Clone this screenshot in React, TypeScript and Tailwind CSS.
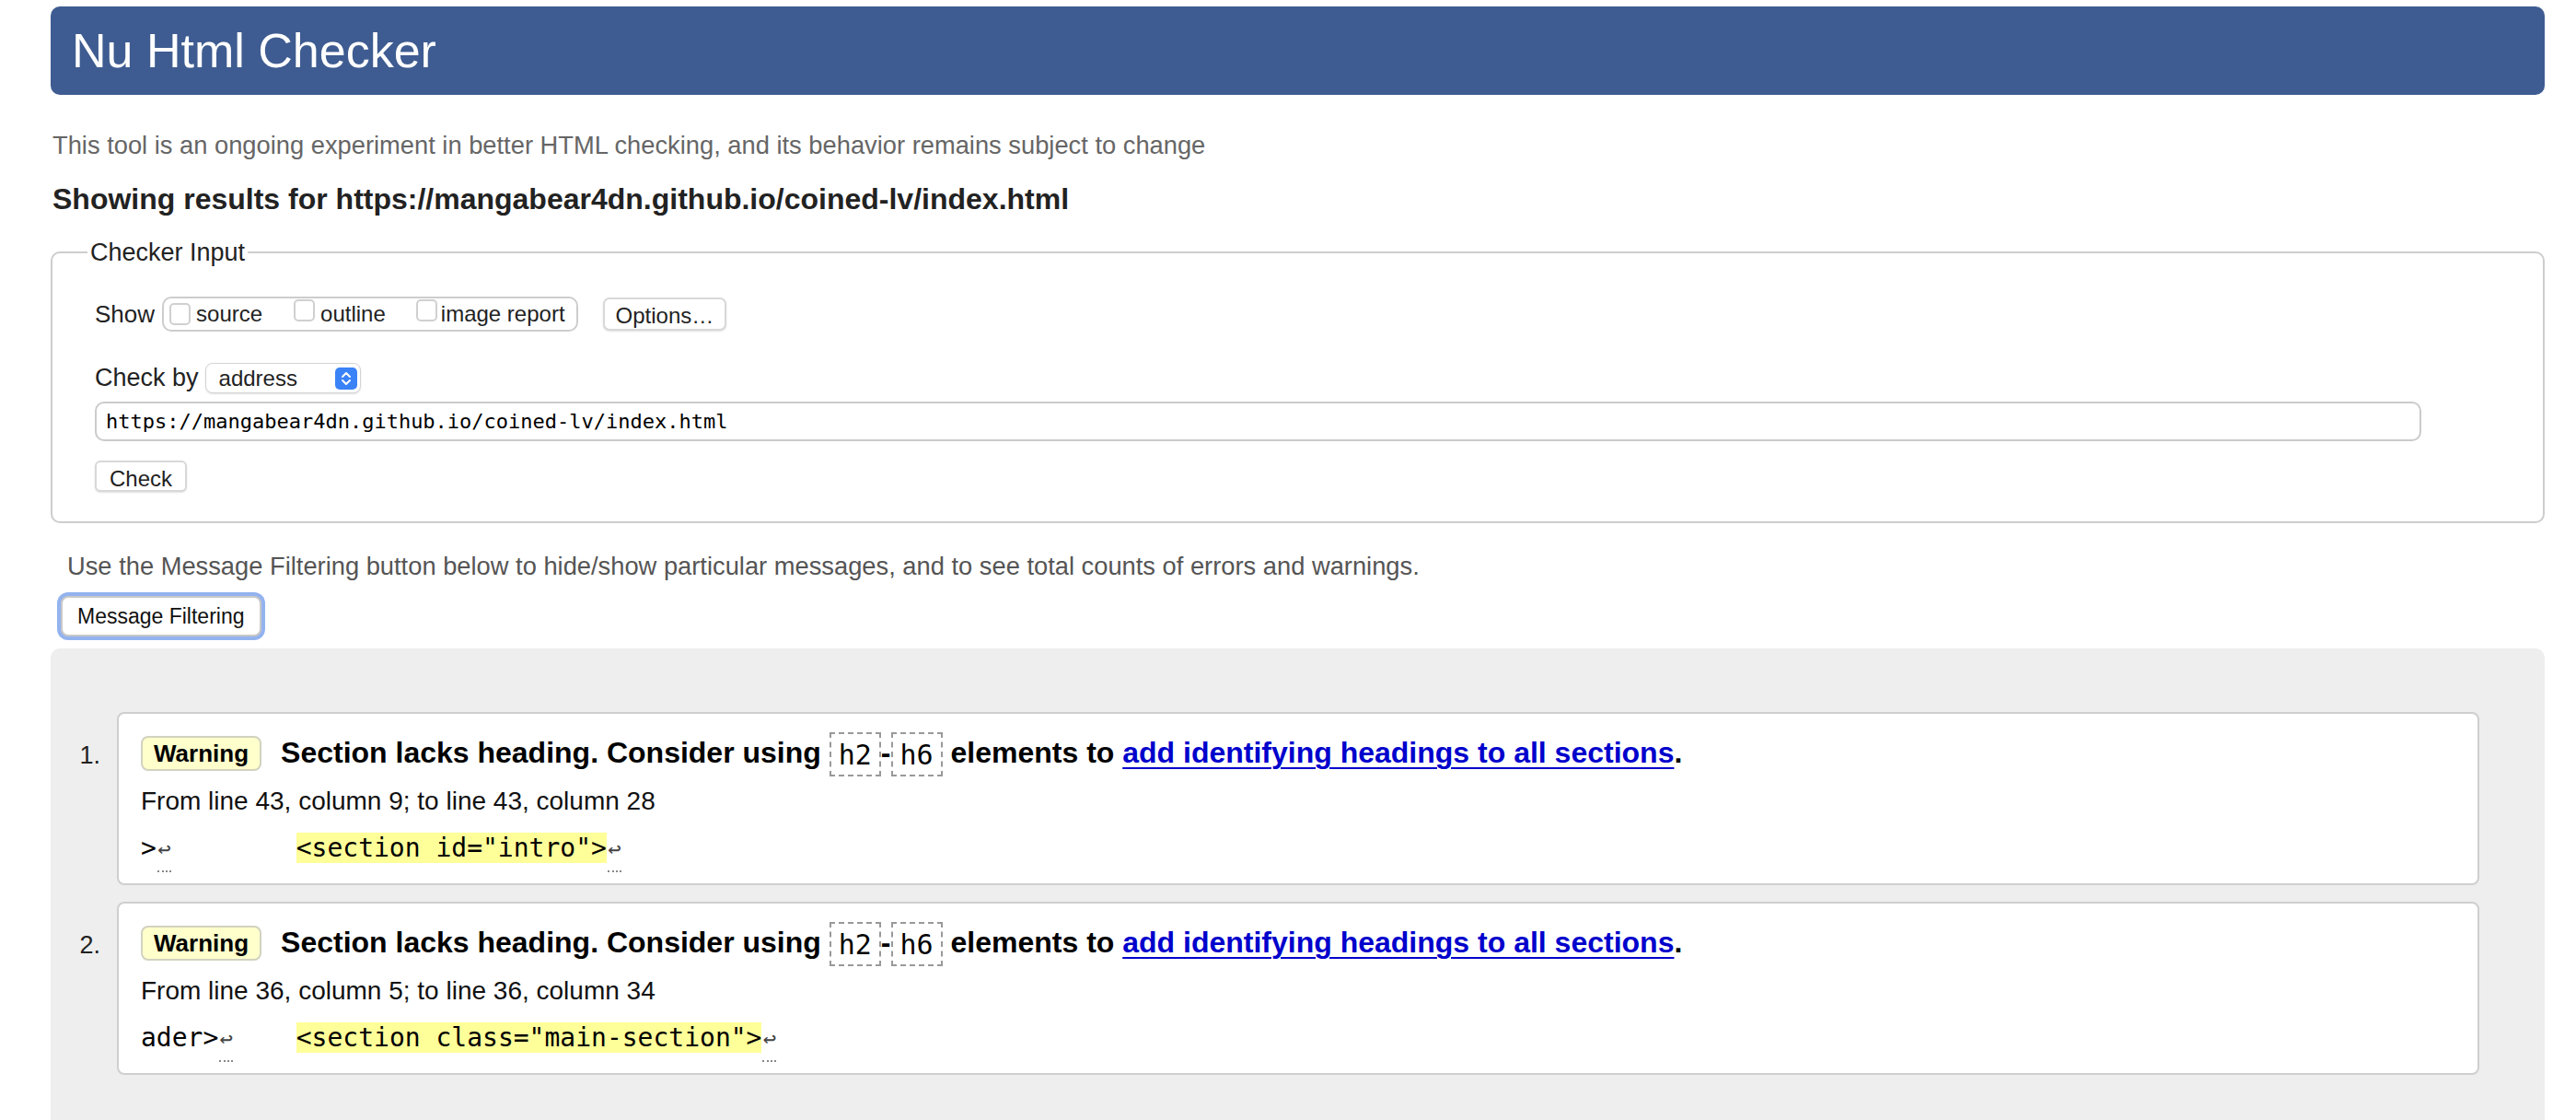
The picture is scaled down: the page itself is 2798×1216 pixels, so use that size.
import React from "react";

const sans = "font-['Liberation_Sans',Arial,sans-serif]";
const mono = "font-['DejaVu_Sans_Mono',Menlo,monospace]";

function LineBreak() {
  return (
    <span className="relative inline-block w-[17px] text-center align-baseline">
      <span className="text-[24px] text-[#444]">↩</span>
      <span className="absolute left-[1px] right-[1px] bottom-[-7px] border-b-2 border-dotted border-[#888]" />
    </span>
  );
}

function CodeBox({ children }: { children: React.ReactNode }) {
  return (
    <span
      className={`inline-flex h-[48px] items-center border-2 border-dashed border-[#999] px-[8px] align-middle text-[30px] font-normal ${mono}`}
    >
      {children}
    </span>
  );
}

function Checkbox() {
  return <span className="inline-block h-[24px] w-[23px] rounded-[5px] border-2 border-[#d0d0d0] bg-white" />;
}

type Msg = {
  n: number;
  from: string;
  before: string;
  pad: string;
  mark: string;
};

const messages: Msg[] = [
  {
    n: 1,
    from: "From line 43, column 9; to line 43, column 28",
    before: ">",
    pad: "        ",
    mark: '<section id="intro">',
  },
  {
    n: 2,
    from: "From line 36, column 5; to line 36, column 34",
    before: "ader>",
    pad: "    ",
    mark: '<section class="main-section">',
  },
];

function Message({ m }: { m: Msg }) {
  return (
    <li className="flex">
      <span className="w-[72px] shrink-0 pr-[18px] pt-[29px] text-right text-[27px] leading-[36px] text-[#222]">
        {m.n}.
      </span>
      <div className="flex-1 rounded-[8px] border-2 border-[#cfcfcf] bg-white pl-[24px] pt-[19px] pb-[20px]">
        <div className="flex h-[48px] items-center">
          <span className="flex h-[38px] items-center rounded-[8px] border-2 border-[#d2d2c0] bg-[#ffffcc] px-[12px] text-[26px] font-bold text-black">
            Warning
          </span>
          <p className="ml-[21px] text-[32px] font-bold text-black">
            Section lacks heading. Consider using <CodeBox>h2</CodeBox>-<CodeBox>h6</CodeBox> elements to{" "}
            <a href="#" className="text-[#0000cc] underline decoration-2 underline-offset-[5px]">
              add identifying headings to all sections
            </a>
            .
          </p>
        </div>
        <p className="mt-[12px] h-[32px] text-[28px] leading-[32px] text-[#111]">{m.from}</p>
        <div className={`mt-[17px] h-[36px] whitespace-pre text-[28px] leading-[36px] text-black ${mono}`}>
          <span>{m.before}</span>
          <LineBreak />
          <span>{m.pad}</span>
          <mark className="bg-[#ffff99] text-black">{m.mark}</mark>
          <LineBreak />
        </div>
      </div>
    </li>
  );
}

export default function App() {
  return (
    <div className={`min-h-screen bg-white pl-[55px] pr-[34px] pt-[7px] ${sans}`}>
      <header className="flex h-[96px] items-center rounded-[10px] bg-[#3e5c91] pl-[23px]">
        <h1 className="text-[52px] leading-none text-white">Nu Html Checker</h1>
      </header>

      <p className="mt-[38px] h-[34px] pl-[2px] text-[27.3px] leading-[34px] text-[#666]">
        This tool is an ongoing experiment in better HTML checking, and its behavior remains subject to change
      </p>
      <h2 className="mt-[22px] h-[38px] pl-[2px] text-[32px] font-bold leading-[38px] text-[#222]">
        Showing results for https://mangabear4dn.github.io/coined-lv/index.html
      </h2>

      <fieldset className="mt-[22px] rounded-[10px] border-2 border-[#cdcdcd] px-[46px] pb-[31px]">
        <legend className="-ml-[8px] px-[3px] text-[27px] leading-[34px] text-[#222]">Checker Input</legend>

        <div className="mt-[31px] flex h-[38px] items-center text-[#222]">
          <span className="text-[26px]">Show</span>
          <div className="ml-[8px] flex h-[38px] items-center rounded-[10px] border-2 border-[#cdcdcd] pl-[6px] pr-[12px] text-[24px]">
            <Checkbox />
            <span className="ml-[6px]">source</span>
            <span className="ml-[34px]"><Checkbox /></span>
            <span className="ml-[6px]">outline</span>
            <span className="ml-[33px]"><Checkbox /></span>
            <span className="ml-[4px]">image report</span>
          </div>
          <button className="ml-[27px] h-[36px] rounded-[7px] border-2 border-[#d8d8d8] bg-white px-[12px] text-[24px] text-[#222] shadow-[0_1px_2px_rgba(0,0,0,0.12)]">
            Options…
          </button>
        </div>

        <div className="mt-[34px] flex h-[33px] items-center text-[#222]">
          <span className="text-[27px]">Check by</span>
          <div className="ml-[7px] flex h-[33px] w-[169px] items-center justify-between rounded-[8px] border border-[#d4d4d4] bg-white pl-[14px] pr-[3px] shadow-[0_1px_2px_rgba(0,0,0,0.12)]">
            <span className="text-[24px]">address</span>
            <span className="flex h-[24px] w-[24px] items-center justify-center rounded-[5px] bg-[#3a82f7]">
              <svg width="12" height="18" viewBox="0 0 12 18" fill="none" stroke="white" strokeWidth="2" strokeLinecap="round" strokeLinejoin="round">
                <path d="M2 7 L6 3 L10 7" />
                <path d="M2 11 L6 15 L10 11" />
              </svg>
            </span>
          </div>
        </div>

        <div className={`mt-[9px] flex h-[43px] w-[2527px] items-center rounded-[10px] border-2 border-[#cbcbcb] pl-[10px] text-[22px] text-black ${mono}`}>
          https://mangabear4dn.github.io/coined-lv/index.html
        </div>

        <button className="mt-[21px] h-[34px] rounded-[6px] border-2 border-[#d8d8d8] bg-white px-[14px] text-[24px] text-[#222] shadow-[0_1px_2px_rgba(0,0,0,0.12)]">
          Check
        </button>
      </fieldset>

      <p className="mt-[30px] h-[34px] pl-[18px] text-[27.3px] leading-[34px] text-[#555]">
        Use the Message Filtering button below to hide/show particular messages, and to see total counts of errors and warnings.
      </p>
      <button className="ml-[11px] mt-[15px] h-[44px] rounded-[8px] border-2 border-[#c8c8c8] bg-white px-[16px] text-[23px] text-[#111] ring-4 ring-[#93b3ef]">
        Message Filtering
      </button>

      <div className="mt-[13px] rounded-t-[10px] bg-[#eeeeee] pb-[80px] pr-[71px] pt-[69px]">
        <ol className="flex flex-col gap-[18px]">
          {messages.map((m) => (
            <Message key={m.n} m={m} />
          ))}
        </ol>
      </div>
    </div>
  );
}
